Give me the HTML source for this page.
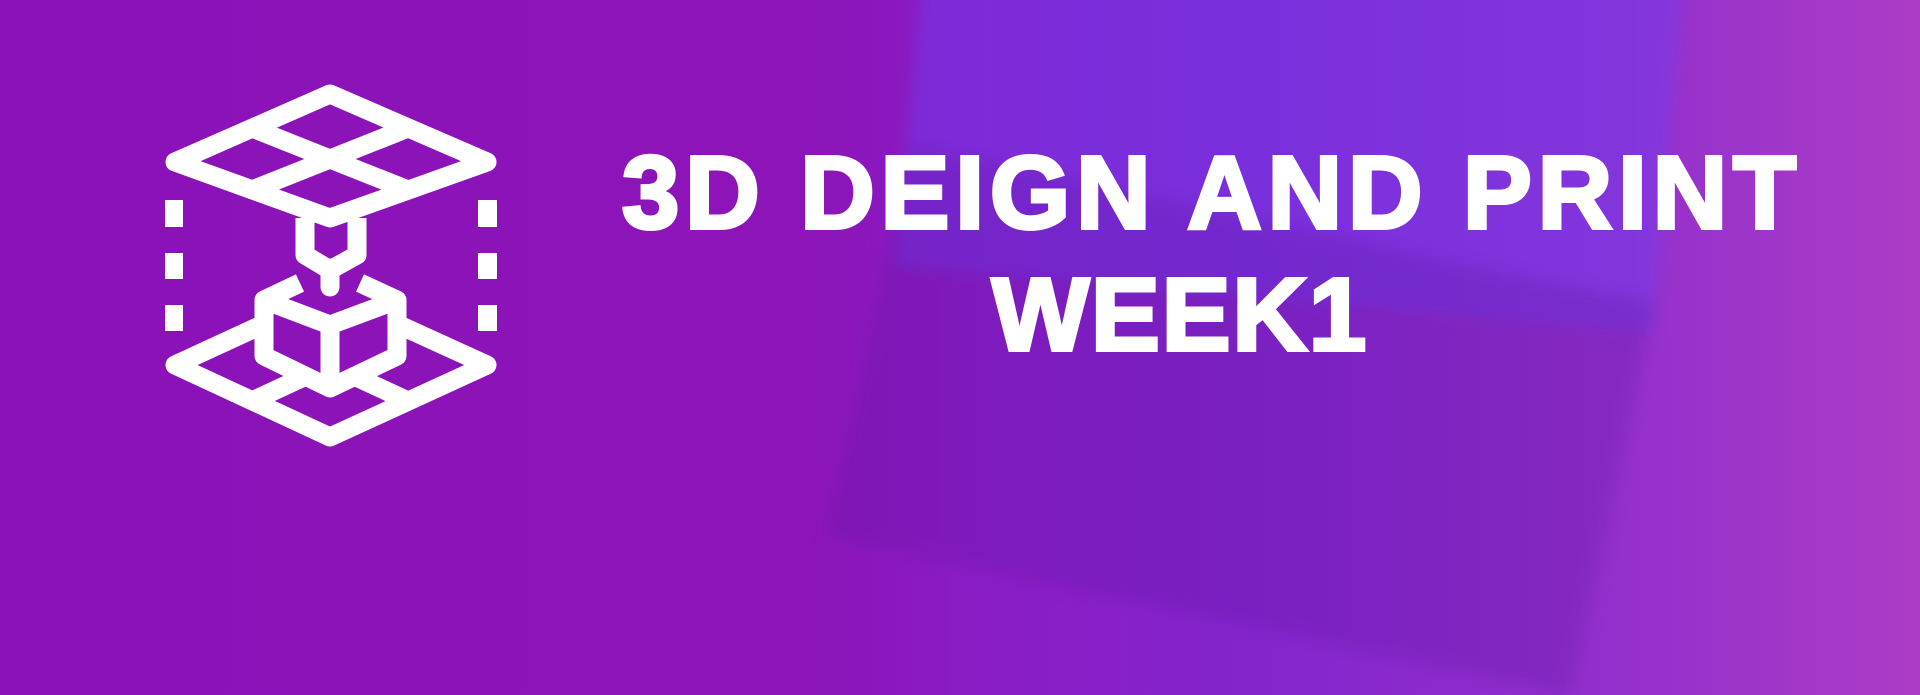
<!DOCTYPE html>
<html><head><meta charset="utf-8"><style>
html,body{margin:0;padding:0}
body{width:1920px;height:540px;overflow:hidden;position:relative;font-family:"Liberation Sans",sans-serif;
background:linear-gradient(90deg,#8a12b8 0%,#8c14b8 42%,#8a1cc4 50%,#8424cc 65%,#9430cc 85%,#ac3cc6 100%);}
.scr{position:absolute;left:910px;top:-60px;width:760px;height:360px;background:rgba(110,60,240,0.45);transform:rotate(5deg);filter:blur(6px)}
.kb{position:absolute;left:860px;top:220px;width:760px;height:400px;background:rgba(90,20,160,0.25);transform:rotate(12deg);filter:blur(8px)}
.t{position:absolute;left:0;width:2360px;text-align:center;color:#fff;font-weight:bold;font-size:103px;line-height:1;-webkit-text-stroke:4px #fff}
</style></head><body>
<div class="scr"></div><div class="kb"></div>
<svg style="position:absolute;left:0;top:0" width="1920" height="540">
<g fill="none" stroke="#fff" stroke-width="19" stroke-linejoin="round" stroke-linecap="butt">
<path d="M330,94 L175,162 L330,218 L487,162 Z"/>
<path d="M252,128 L408,190 M408,128 L252,190"/>
<path d="M305,218 L305,255 L330,270 L357,255 L357,218"/>
<path d="M330,268 L330,287" stroke-linecap="round"/>
<path d="M300,283 L264,300 L264,356 L330,388 L397,356 L397,300 L360,283"/>
<path d="M264,300 L330,325 L397,300 M330,325 L330,388"/>
<path d="M264,324 L175,365 L330,437 L487,365 L397,324"/>
<path d="M252,401 L306,376 M408,401 L354,376"/>
</g>
<g fill="#fff">
<rect x="165" y="200" width="18" height="27"/><rect x="165" y="253" width="18" height="26"/><rect x="165" y="305" width="18" height="26"/>
<rect x="478" y="200" width="19" height="27"/><rect x="478" y="253" width="19" height="26"/><rect x="478" y="305" width="19" height="26"/>
</g>
</svg>
<div class="t" style="top:141px;left:32px;letter-spacing:6px">3D DEIGN AND PRINT</div>
<div class="t" style="top:263px;letter-spacing:2px">WEEK1</div>
</body></html>
